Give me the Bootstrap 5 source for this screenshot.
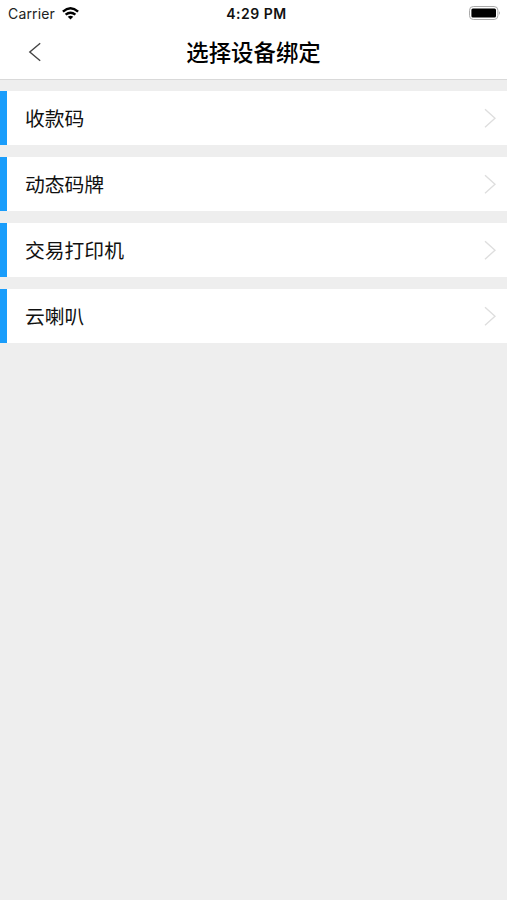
<!DOCTYPE html>
<html lang="zh-CN">
<head>
<meta charset="utf-8">
<meta name="viewport" content="width=device-width, initial-scale=1">
<title>选择设备绑定</title>
<link href="https://cdn.jsdelivr.net/npm/bootstrap@5.3.0/dist/css/bootstrap.min.css" rel="stylesheet">
<style>
body{background:#eee;color:#111;font-family:"Inter","Noto Sans CJK SC",sans-serif}
.topbar{height:80px;border-bottom:1px solid #d9d9d9}
.status{height:26px;padding:0 6px 0 8px;font-size:14px;line-height:24px}
.carrier{gap:7px;letter-spacing:.15px;color:#222}
.carrier span,.clock{padding-top:2px}
.clock{font-weight:600;font-size:14px;letter-spacing:.5px;padding-left:4px;color:#111}
.title-row{height:52px;padding:0 28px}
.page-title{font-size:22.4px;font-weight:500;line-height:50px;padding-top:2px;color:#000}
.side{width:16px}
.devices{padding-top:11px;gap:12px}
.device{height:54px;border-left:7px solid #1a9dfb;padding:0 11px 0 18px;font-size:19.8px;color:#111}
.device span{padding-top:3px}
svg{display:block}
</style>
</head>
<body>
<header class="topbar bg-white">
<div class="status row g-0 align-items-center">
<div class="col d-flex align-items-center carrier"><span>Carrier</span>
<svg width="17" height="13" viewBox="0 0 17 13" fill="none" stroke="#000" stroke-width="2.4"><path d="M.9 4.7Q8.5-2 16.1 4.7M3.6 7.7Q8.5 3.6 13.4 7.7"/><path d="M8.5 12.4 5.7 9.7Q8.5 7.6 11.3 9.7Z" fill="#000" stroke="none"/></svg></div>
<div class="col-auto clock">4:29 PM</div>
<div class="col d-flex justify-content-end"><svg width="32" height="14" viewBox="0 0 32 14"><rect x=".5" y=".5" width="28.4" height="13" rx="3.8" fill="none" stroke="#aaa"/><rect x="2.4" y="2.5" width="24.6" height="9" rx="1.5" fill="#000"/><path d="M30.1 5q1.8 2 0 4z" fill="#999"/></svg></div>
</div>
<div class="title-row d-flex justify-content-between align-items-center">
<a href="#" class="side" aria-label="返回"><svg width="14" height="20" viewBox="0 0 14 20" fill="none" stroke="#444" stroke-width="1.4"><path d="M12.2 1.2 1.8 10 12.2 18.8"/></svg></a>
<h1 class="page-title m-0">选择设备绑定</h1><span class="side"></span>
</div>
</header>
<main class="devices d-flex flex-column">
<div class="device bg-white d-flex align-items-center justify-content-between"><span>收款码</span><svg width="12" height="20" viewBox="0 0 12 20" fill="none" stroke="#dedede" stroke-width="1.4"><path d="M1 1.2 11 10.2 1 19.2"/></svg></div>
<div class="device bg-white d-flex align-items-center justify-content-between"><span>动态码牌</span><svg width="12" height="20" viewBox="0 0 12 20" fill="none" stroke="#dedede" stroke-width="1.4"><path d="M1 1.2 11 10.2 1 19.2"/></svg></div>
<div class="device bg-white d-flex align-items-center justify-content-between"><span>交易打印机</span><svg width="12" height="20" viewBox="0 0 12 20" fill="none" stroke="#dedede" stroke-width="1.4"><path d="M1 1.2 11 10.2 1 19.2"/></svg></div>
<div class="device bg-white d-flex align-items-center justify-content-between"><span>云喇叭</span><svg width="12" height="20" viewBox="0 0 12 20" fill="none" stroke="#dedede" stroke-width="1.4"><path d="M1 1.2 11 10.2 1 19.2"/></svg></div>
</main>
<script src="https://cdn.jsdelivr.net/npm/bootstrap@5.3.0/dist/js/bootstrap.bundle.min.js"></script>
</body>
</html>
